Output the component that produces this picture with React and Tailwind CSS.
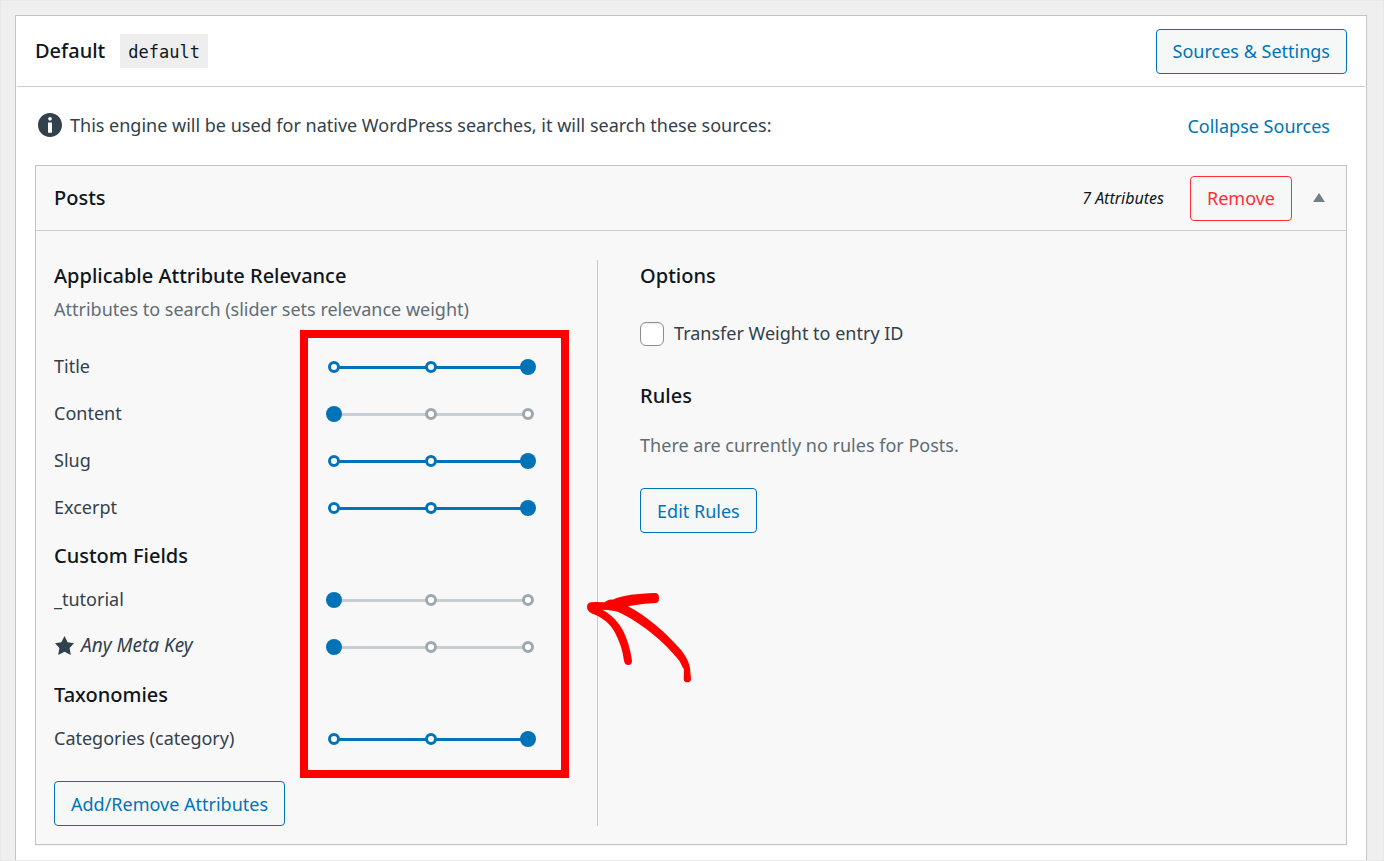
import { useState } from 'react';
import { clsx } from 'clsx';

const attributeGroups = [
  {
    attributes: [
      { id: 'title', label: 'Title', weight: 3 },
      { id: 'content', label: 'Content', weight: 1 },
      { id: 'slug', label: 'Slug', weight: 3 },
      { id: 'excerpt', label: 'Excerpt', weight: 3 },
    ],
  },
  {
    heading: 'Custom Fields',
    attributes: [
      { id: 'tutorial', label: '_tutorial', weight: 1 },
      { id: 'any-meta-key', label: 'Any Meta Key', weight: 1, starred: true },
    ],
  },
  {
    heading: 'Taxonomies',
    attributes: [{ id: 'category', label: 'Categories (category)', weight: 3 }],
  },
];

const steps = [1, 2, 3];

function InfoIcon() {
  return (
    <svg viewBox="0 0 20 20" className="h-[30px] w-[30px] shrink-0 fill-[#32414b]" aria-hidden="true">
      <path d="M10 2c4.42 0 8 3.58 8 8s-3.58 8-8 8-8-3.58-8-8 3.58-8 8-8zm1.2 3.9c0-.66-.54-1.2-1.2-1.2s-1.2.54-1.2 1.2.54 1.2 1.2 1.2 1.2-.54 1.2-1.2zm.1 9.3V8.4H8.7v6.8h2.6z" />
    </svg>
  );
}

function StarIcon() {
  return (
    <svg viewBox="0 0 20 20" className="h-[21px] w-[21px] shrink-0 fill-[#32414b]" aria-hidden="true">
      <path d="M10 1l3 6 6 .75-4.12 4.62L16 19l-6-3-6 3 1.13-6.63L1 7.75 7 7z" />
    </svg>
  );
}

function Button({ variant = 'primary', children }) {
  return (
    <button
      type="button"
      className={clsx(
        'h-[45px] rounded border px-4 text-lg whitespace-nowrap',
        variant === 'primary' && 'border-[#0073b8] bg-[#f6f8f8] text-[#0073b8]',
        variant === 'danger' && 'border-[#ff2d37] bg-[#f6f8f8] text-[#ff2d37]',
        variant === 'link' && 'border-transparent text-[#0073b8]'
      )}
    >
      {children}
    </button>
  );
}

function Heading({ children, className }) {
  return <h3 className={clsx('text-[20px] font-medium text-[#0f161c]', className)}>{children}</h3>;
}

function WeightSlider({ id, value, onChange }) {
  const active = value > 1;

  return (
    <div className="relative flex h-4 flex-1 items-center px-[2px]">
      <div className={clsx('absolute inset-x-2 top-[7px] h-[3px]', active ? 'bg-[#0073b8]' : 'bg-[#c8ced2]')} />
      <div className="relative flex w-full justify-between">
        {steps.map((step) => (
          <span
            key={step}
            className={clsx(
              'h-3 w-3 rounded-full border-[3px] bg-white',
              step <= value ? 'border-[#0073b8]' : 'border-[#9da8af]'
            )}
          />
        ))}
      </div>
      <input
        id={id}
        type="range"
        min="1"
        max="3"
        value={value}
        onChange={(e) => onChange(Number(e.target.value))}
        className="absolute inset-0 h-4 w-full cursor-pointer appearance-none bg-transparent [&::-webkit-slider-thumb]:h-4 [&::-webkit-slider-thumb]:w-4 [&::-webkit-slider-thumb]:appearance-none [&::-webkit-slider-thumb]:rounded-full [&::-webkit-slider-thumb]:bg-[#0073b8]"
      />
    </div>
  );
}

function AttributeRow({ attribute }) {
  const [weight, setWeight] = useState(attribute.weight);

  return (
    <div className="flex h-[47px] items-center pr-[61px]">
      <label
        htmlFor={attribute.id}
        className={clsx(
          'flex w-[272px] shrink-0 items-center gap-1.5 pb-0.5 text-[#32414b]',
          attribute.starred ? 'text-[19px] italic' : 'text-lg'
        )}
      >
        {attribute.starred && <StarIcon />}
        {attribute.label}
      </label>
      <WeightSlider id={attribute.id} value={weight} onChange={setWeight} />
    </div>
  );
}

/* Red frame around the sliders with a hand drawn arrow pointing at it */
function Highlight() {
  return (
    <>
      <div className="pointer-events-none absolute top-[70px] right-[28px] left-[246px] h-[448px] border-8 border-[#ff0000]" />
      <svg
        viewBox="0 0 420 390"
        className="pointer-events-none absolute top-[310px] right-[-113px] h-[130px] w-[140px] fill-[#ff0000]"
        aria-hidden="true"
      >
        <path d="M52 104C54 98 62 96 72 96L104 97C112 90 120 88 128 89C160 75 200 71 255 69C263 69 267 74 267 84C267 94 264 99 257 99C228 100 196 104 174 109C230 138 290 190 333 240C350 262 362 285 361 306L363 326C363 334 358 337 352 337C345 337 341 333 341 326L342 298C336 290 334 282 328 272C280 212 220 164 156 131C140 122 118 119 97 119C125 135 145 155 158 180C172 207 180 235 186 272C186 280 182 285 175 285C167 285 164 281 162 272C158 240 148 212 134 186C120 162 100 145 72 133C58 127 48 120 52 104Z" />
      </svg>
    </>
  );
}

function AttributesColumn() {
  return (
    <div className="relative border-r border-[#c9cbcd]">
      <Heading className="leading-8">Applicable Attribute Relevance</Heading>
      <p className="text-lg leading-[34px] text-[#5f6d76]">Attributes to search (slider sets relevance weight)</p>
      <div className="mt-[17px]">
        {attributeGroups.map((group, i) => (
          <div key={i}>
            {group.heading && <Heading className="h-[45px] pt-1 leading-[42px]">{group.heading}</Heading>}
            {group.attributes.map((attribute) => (
              <AttributeRow key={attribute.id} attribute={attribute} />
            ))}
          </div>
        ))}
      </div>
      <div className="mt-[19px]">
        <Button>Add/Remove Attributes</Button>
      </div>
      <Highlight />
    </div>
  );
}

function OptionsColumn() {
  return (
    <div className="pl-[42px]">
      <Heading className="leading-8">Options</Heading>
      <label className="mt-6 flex h-9 items-center gap-[10px] text-lg text-[#32414b]">
        <input
          type="checkbox"
          className="h-6 w-6 appearance-none rounded-md border border-[#8c8f94] bg-white shadow-[inset_0_1px_2px_rgba(0,0,0,0.1)]"
        />
        <span className="pb-0.5">Transfer Weight to entry ID</span>
      </label>
      <Heading className="mt-7 leading-8">Rules</Heading>
      <p className="mt-4 text-lg leading-[34px] text-[#5f6d76]">There are currently no rules for Posts.</p>
      <div className="mt-[26px]">
        <Button>Edit Rules</Button>
      </div>
    </div>
  );
}

function SourceCard() {
  return (
    <section className="mx-[19px] border border-[#c3c4c7] bg-[#f8f8f8] shadow-[0_1px_1px_rgba(0,0,0,0.04)]">
      <div className="flex h-[65px] items-center border-b border-[#c8d0d5] pr-[21px] pl-[18px]">
        <Heading>Posts</Heading>
        <span className="mr-[26px] ml-auto text-base text-[#0f161c] italic">7 Attributes</span>
        <Button variant="danger">Remove</Button>
        <button type="button" aria-label="Toggle Posts" className="ml-[21px] pb-0.5">
          <svg viewBox="0 0 12 9" className="h-[9px] w-3 fill-[#72808a]" aria-hidden="true">
            <path d="M6 0l6 9H0z" />
          </svg>
        </button>
      </div>
      <div className="grid grid-cols-[41fr_55fr] px-[18px] pt-[29px] pb-[18px]">
        <AttributesColumn />
        <OptionsColumn />
      </div>
    </section>
  );
}

export default function App() {
  return (
    <div className="flex min-h-screen flex-col border border-[#e8e8e8] bg-[#efefef] pt-[14px] pr-4 pl-[14px] font-['Noto_Sans',sans-serif]">
      <main className="flex-1 border border-b-0 border-[#c3c4c7] bg-white">
        <header className="mx-px flex h-[71px] items-center border-b border-[#c8d0d5] px-[18px]">
          <h2 className="text-[20px] font-medium text-[#0f161c]">Default</h2>
          <code className="ml-[15px] bg-[#eeeeee] px-2 pt-0.5 font-['DejaVu_Sans_Mono',monospace] text-[17px] leading-8 text-[#0f161c]">
            default
          </code>
          <div className="ml-auto">
            <Button>Sources &amp; Settings</Button>
          </div>
        </header>
        <div className="flex h-[78px] items-center justify-between px-[19px]">
          <p className="flex items-center gap-[5px] pb-0.5 text-lg text-[#32414b]">
            <InfoIcon />
            This engine will be used for native WordPress searches, it will search these sources:
          </p>
          <Button variant="link">Collapse Sources</Button>
        </div>
        <SourceCard />
      </main>
    </div>
  );
}
